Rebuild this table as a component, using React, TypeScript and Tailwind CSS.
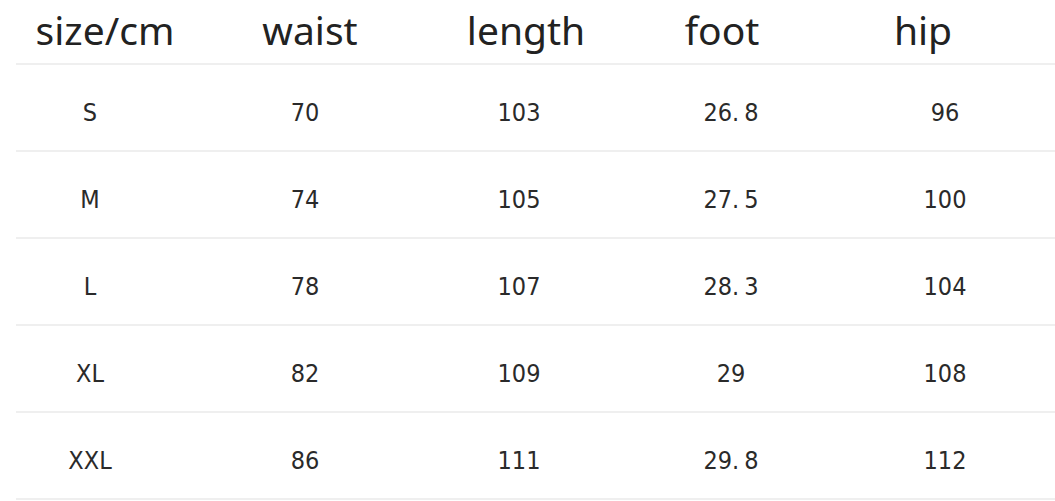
const headers = [
  { label: 'size/cm', w: 'w-[210px]' },
  { label: 'waist', w: 'w-[200px]' },
  { label: 'length', w: 'w-[232px]' },
  { label: 'foot', w: 'w-[160px]' },
  { label: 'hip', w: 'w-[242px]' },
]

const colWidths = ['w-[180px]', 'w-[250px]', 'w-[178px]', 'w-[246px]', 'w-[182px]']

const rows = [
  ['S', '70', '103', '26.8', '96'],
  ['M', '74', '105', '27.5', '100'],
  ['L', '78', '107', '28.3', '104'],
  ['XL', '82', '109', '29', '108'],
  ['XXL', '86', '111', '29.8', '112'],
]

function Cell({ value }: { value: string }) {
  // the source table shows a wide gap after the decimal point
  const parts = value.split('.')
  if (parts.length === 1) return <>{value}</>
  return (
    <>
      {parts[0]}.<span className="ml-[5px]">{parts[1]}</span>
    </>
  )
}

function Divider() {
  return <div className="ml-4 h-[2px] bg-[#efefef]" />
}

export default function App() {
  return (
    <div className="w-[1055px] h-[501px] bg-white text-[#222] overflow-hidden">
      <div
        className="flex h-[63px] items-center pb-[2px] text-[39px]"
        style={{ fontFamily: '"Noto Sans", "Open Sans", sans-serif' }}
      >
        {headers.map(h => (
          <div key={h.label} className={`${h.w} text-center`}>
            {h.label}
          </div>
        ))}
      </div>
      <Divider />
      {rows.map(row => (
        <div key={row[0]}>
          <div
            className="flex h-[85px] items-center pt-[10px] text-[25px] text-[#2a2a2a]"
            style={{ fontFamily: '"Liberation Sans Narrow", "DejaVu Sans Condensed", "Liberation Sans", sans-serif' }}
          >
            {row.map((v, i) => (
              <div key={i} className={`${colWidths[i]} text-center`}>
                <Cell value={v} />
              </div>
            ))}
          </div>
          <Divider />
        </div>
      ))}
    </div>
  )
}
